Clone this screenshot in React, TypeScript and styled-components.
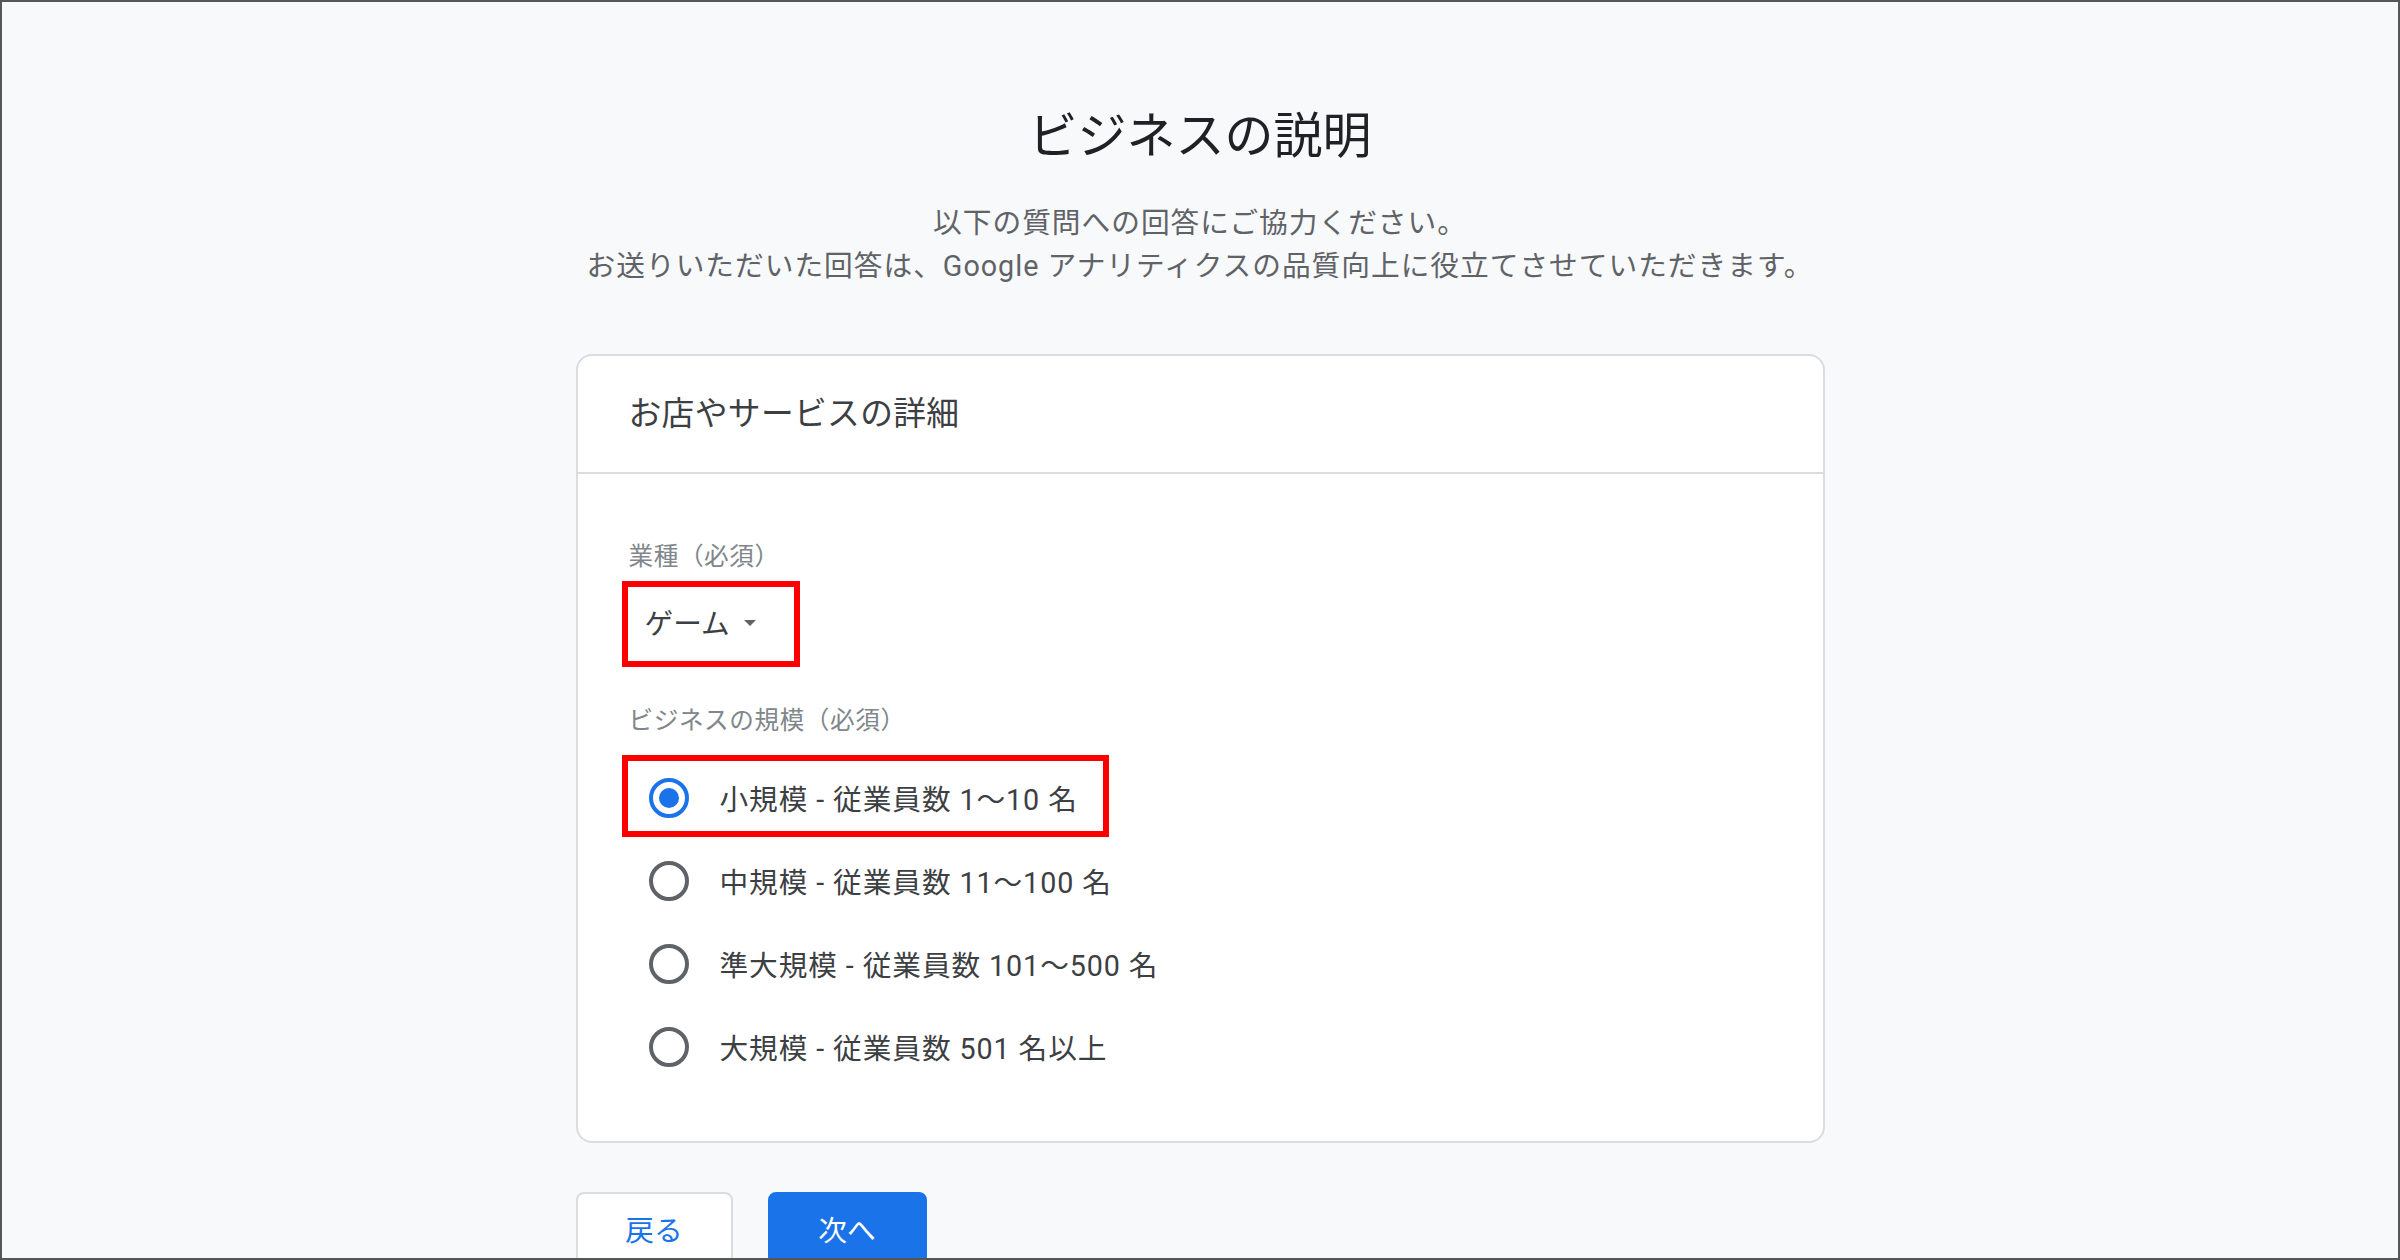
import React from "react";
import styled, { createGlobalStyle } from "styled-components";

const Global = createGlobalStyle`
  html, body { margin: 0; padding: 0; }
  body {
    font-family: Roboto, "Noto Sans CJK JP", "Noto Sans", sans-serif;
    background: #f8f9fa;
  }
  * { box-sizing: border-box; }
`;

const Page = styled.div`
  width: 100vw;
  height: 100vh;
  overflow: hidden;
  border: 2px solid #555757;
  background: #f8f9fa;
  display: flex;
  flex-direction: column;
  align-items: center;
  padding-top: 103px;
`;

const Title = styled.h1`
  margin: 0;
  font-size: 49px;
  line-height: 64px;
  font-weight: 400;
  color: #202124;
`;

const Subtitle = styled.p`
  margin: 33px 0 0;
  font-size: 28.7px;
  line-height: 43px;
  letter-spacing: 1px;
  color: #5f6368;
  text-align: center;
`;

const Column = styled.div`
  width: 1249px;
  margin-top: 66px;
  display: flex;
  flex-direction: column;
`;

const Card = styled.section`
  background: #fff;
  border: 2px solid #dadce0;
  border-radius: 16px;
`;

const CardHeader = styled.div`
  height: 118px;
  border-bottom: 2px solid #dadce0;
  display: flex;
  align-items: center;
  padding: 0 51px 8px;
  font-size: 32.8px;
  letter-spacing: 0.3px;
  color: #3c4043;
`;

const CardBody = styled.div`
  padding: 67px 51px 53px;
  display: flex;
  flex-direction: column;
  align-items: flex-start;
`;

const FieldLabel = styled.div<{ $gap?: number }>`
  margin-top: ${(p) => p.$gap ?? 0}px;
  font-size: 24.6px;
  line-height: 32px;
  letter-spacing: 0.6px;
  color: #80868b;
`;

const Highlight = styled.div<{ $mt?: number; $t: number; $r: number; $b: number; $l: number }>`
  position: relative;
  margin-top: ${(p) => p.$mt ?? 0}px;
  &::after {
    content: "";
    position: absolute;
    top: ${(p) => -p.$t}px;
    right: ${(p) => -p.$r}px;
    bottom: ${(p) => -p.$b}px;
    left: ${(p) => -p.$l}px;
    border: 6px solid #ff0000;
    pointer-events: none;
  }
`;

const Dropdown = styled.div`
  height: 64px;
  width: 171px;
  display: flex;
  align-items: center;
  padding: 0 0 7px 16px;
  font-size: 28.7px;
  color: #3c4043;
`;

const Caret = styled.span`
  margin-left: 14px;
  margin-top: 2px;
  width: 0;
  height: 0;
  border-left: 6px solid transparent;
  border-right: 6px solid transparent;
  border-top: 6px solid #5f6368;
`;

const RadioGroup = styled.div`
  margin-top: 19px;
  display: flex;
  flex-direction: column;
  align-items: flex-start;
`;

const RadioRow = styled.label`
  height: 83px;
  display: inline-flex;
  align-items: center;
  font-size: 28.7px;
  letter-spacing: 0.9px;
  color: #3c4043;
`;

const RadioBox = styled.span`
  width: 80px;
  height: 80px;
  display: flex;
  align-items: center;
  justify-content: center;
`;

const RadioCircle = styled.span<{ $checked?: boolean }>`
  width: 40px;
  height: 40px;
  border-radius: 50%;
  border: 4px solid ${(p) => (p.$checked ? "#1a73e8" : "#5f6368")};
  display: flex;
  align-items: center;
  justify-content: center;
  &::after {
    content: "";
    width: 20px;
    height: 20px;
    border-radius: 50%;
    background: #1a73e8;
    display: ${(p) => (p.$checked ? "block" : "none")};
  }
`;

const RadioText = styled.span`
  margin-left: 11px;
`;

const Buttons = styled.div`
  margin-top: 49px;
  display: flex;
  gap: 35px;
`;

const Button = styled.button<{ $primary?: boolean; $w: number }>`
  width: ${(p) => p.$w}px;
  height: 72px;
  border-radius: 8px;
  font-family: inherit;
  font-size: 28.7px;
  cursor: pointer;
  border: 2px solid ${(p) => (p.$primary ? "#1a73e8" : "#dadce0")};
  background: ${(p) => (p.$primary ? "#1a73e8" : "#fff")};
  color: ${(p) => (p.$primary ? "#fff" : "#1a73e8")};
`;

const sizes = [
  "小規模 - 従業員数 1〜10 名",
  "中規模 - 従業員数 11〜100 名",
  "準大規模 - 従業員数 101〜500 名",
  "大規模 - 従業員数 501 名以上",
];

function Radio({ label, checked }: { label: string; checked?: boolean }) {
  return (
    <RadioRow>
      <RadioBox>
        <RadioCircle $checked={checked} />
      </RadioBox>
      <RadioText>{label}</RadioText>
    </RadioRow>
  );
}

export default function App() {
  return (
    <>
      <Global />
      <Page>
        <Title>ビジネスの説明</Title>
        <Subtitle>
          以下の質問への回答にご協力ください。
          <br />
          お送りいただいた回答は、Google アナリティクスの品質向上に役立てさせていただきます。
        </Subtitle>
        <Column>
          <Card>
            <CardHeader>お店やサービスの詳細</CardHeader>
            <CardBody>
              <FieldLabel>業種（必須）</FieldLabel>
              <Highlight $mt={20} $t={12} $r={0} $b={10} $l={7}>
                <Dropdown>
                  ゲーム
                  <Caret />
                </Dropdown>
              </Highlight>
              <FieldLabel $gap={48}>ビジネスの規模（必須）</FieldLabel>
              <RadioGroup>
                {sizes.map((s, i) =>
                  i === 0 ? (
                    <Highlight key={s} $t={1} $r={31} $b={-2} $l={7}>
                      <Radio label={s} checked />
                    </Highlight>
                  ) : (
                    <Radio key={s} label={s} />
                  )
                )}
              </RadioGroup>
            </CardBody>
          </Card>
          <Buttons>
            <Button $w={157}>戻る</Button>
            <Button $primary $w={159}>次へ</Button>
          </Buttons>
        </Column>
      </Page>
    </>
  );
}
